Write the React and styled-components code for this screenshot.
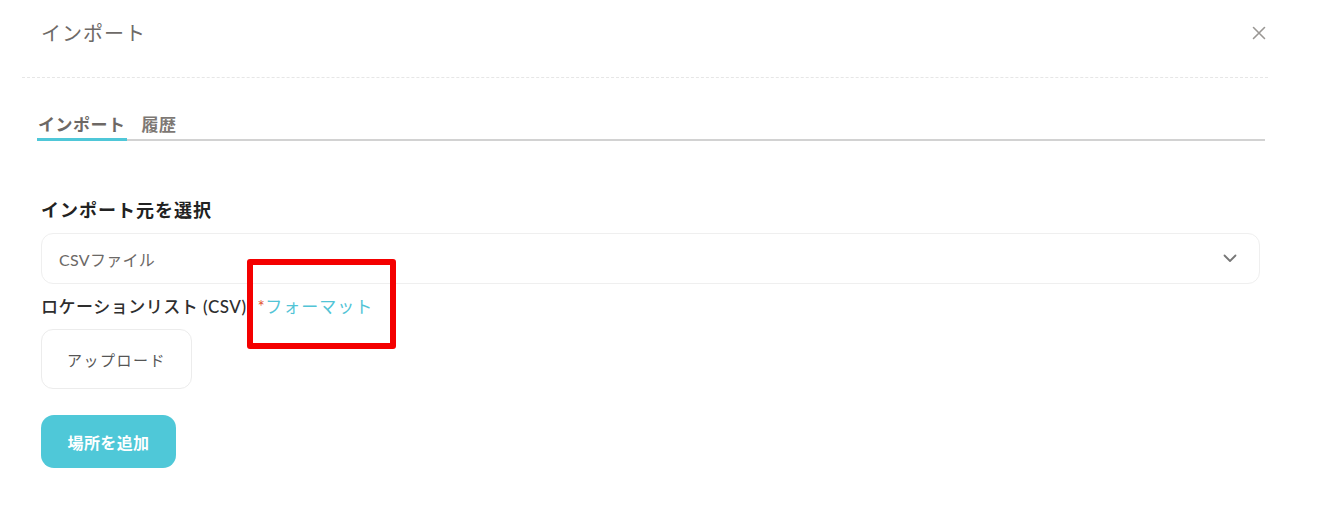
import React from "react";
import styled, { createGlobalStyle } from "styled-components";

const Global = createGlobalStyle`
  html, body { margin: 0; padding: 0; background: #fff; }
  body { font-family: Lato, "Noto Sans CJK JP", sans-serif; }
  * { box-sizing: border-box; }
`;

const Modal = styled.div`
  width: 1342px;
  height: 505px;
  padding: 0 74px 0 22px;
  position: relative;
`;

const Header = styled.div`
  height: 78px;
  display: flex;
  align-items: center;
  justify-content: space-between;
  padding: 0 2px 12px 19px;
  border-bottom: 1px dashed #e6e6e6;
`;

const Title = styled.h2`
  margin: 0;
  font-size: 20px;
  font-weight: 400;
  color: #6e6a67;
  letter-spacing: 1px;
`;

const Close = styled.button`
  border: 0;
  background: none;
  padding: 0;
  width: 14px;
  height: 14px;
  display: flex;
  cursor: pointer;
`;

const Body = styled.div`
  padding: 35px 3px 0 15px;
`;

const Tabs = styled.div`
  display: flex;
  gap: 14px;
  border-bottom: 2px solid #d2d2d2;
`;

const Tab = styled.div`
  font-size: 17px;
  font-weight: 700;
  letter-spacing: 0.5px;
  color: ${(p) => (p.$active ? "#6d6865" : "#7d7874")};
  padding: 0 1px 1px;
  margin-bottom: -2px;
  border-bottom: 3px solid ${(p) => (p.$active ? "#4fc7d8" : "transparent")};
  line-height: 24px;
`;

const Form = styled.div`
  padding: 57px 5px 0 4px;
  display: flex;
  flex-direction: column;
  align-items: flex-start;
`;

const Label = styled.div`
  font-size: 18px;
  font-weight: 700;
  letter-spacing: 1px;
  color: #222;
  line-height: 24px;
`;

const FieldLabel = styled.div`
  font-size: 17px;
  font-weight: 500;
  letter-spacing: 0.5px;
  color: #2e2e2e;
  line-height: 24px;
  display: flex;
  align-items: center;
`;

const Select = styled.div`
  margin: 11px 0 11px;
  width: 100%;
  height: 51px;
  border: 1px solid #efefef;
  border-radius: 12px;
  display: flex;
  align-items: center;
  justify-content: space-between;
  padding: 0 22px 0 17px;
  font-size: 16px;
  letter-spacing: 0.3px;
  color: #6b6866;
`;

const Required = styled.span`
  color: #e2532f;
  margin-left: 11px;
  font-weight: 400;
`;

const FormatLink = styled.a`
  color: #52c4d6;
  font-weight: 400;
  font-size: 17px;
  text-decoration: none;
  letter-spacing: 1px;
`;

const UploadButton = styled.button`
  margin-top: 10px;
  width: 151px;
  height: 60px;
  border: 1px solid #ececec;
  border-radius: 12px;
  background: #fff;
  font-family: inherit;
  font-size: 15px;
  color: #555;
  letter-spacing: 1.5px;
`;

const AddButton = styled.button`
  margin-top: 26px;
  width: 135px;
  height: 53px;
  border: 0;
  border-radius: 13px;
  background: #4fc8d8;
  color: #fff;
  font-family: inherit;
  font-size: 16px;
  font-weight: 700;
  letter-spacing: 0.4px;
`;

const Highlight = styled.div`
  position: absolute;
  left: 247px;
  top: 259px;
  width: 149px;
  height: 90px;
  border: 6px solid #f40000;
  border-radius: 3px;
  pointer-events: none;
`;

export default function App() {
  return (
    <>
      <Global />
      <Modal>
        <Header>
          <Title>インポート</Title>
          <Close aria-label="close">
            <svg width="14" height="14" viewBox="0 0 14 14">
              <path d="M1.5 1.5 L12.5 12.5 M12.5 1.5 L1.5 12.5" stroke="#9a9794" strokeWidth="1.6" strokeLinecap="round" />
            </svg>
          </Close>
        </Header>
        <Body>
          <Tabs>
            <Tab $active>インポート</Tab>
            <Tab>履歴</Tab>
          </Tabs>
          <Form>
            <Label>インポート元を選択</Label>
            <Select>
              <span>CSVファイル</span>
              <svg width="14" height="9" viewBox="0 0 14 9">
                <path d="M1.5 1.5 L7 7 L12.5 1.5" fill="none" stroke="#777" strokeWidth="1.8" strokeLinecap="round" strokeLinejoin="round" />
              </svg>
            </Select>
            <FieldLabel>
              ロケーションリスト (CSV)
              <Required>*</Required>
              <FormatLink href="#">フォーマット</FormatLink>
            </FieldLabel>
            <UploadButton>アップロード</UploadButton>
            <AddButton>場所を追加</AddButton>
          </Form>
        </Body>
        <Highlight />
      </Modal>
    </>
  );
}
